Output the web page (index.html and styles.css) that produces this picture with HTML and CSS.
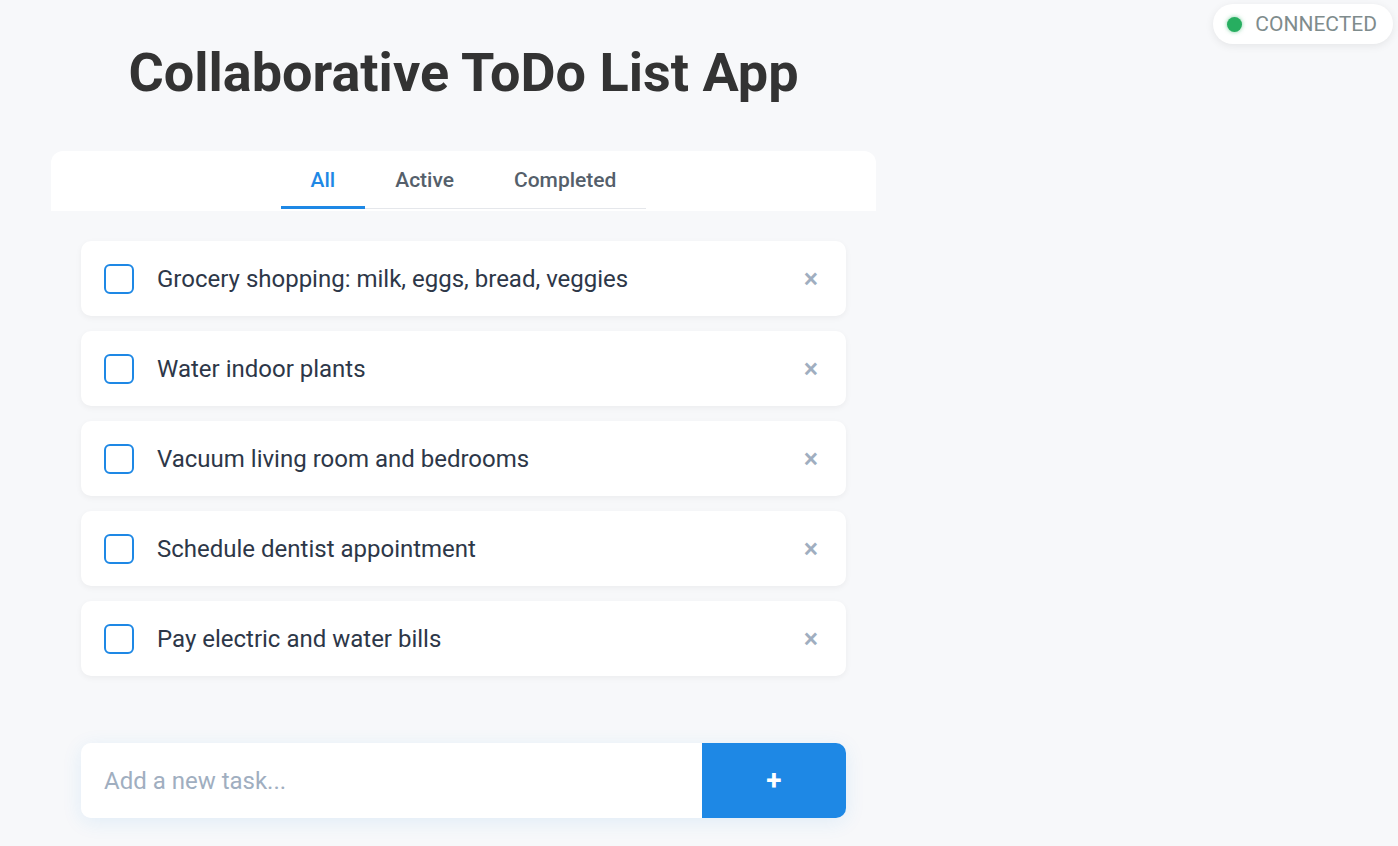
FILE: index.html
```html
<!DOCTYPE html>
<html lang="en">
<head>
<meta charset="utf-8">
<title>Collaborative ToDo List App</title>
<link rel="stylesheet" href="styles.css">
</head>
<body>
<div class="status">
  <span class="dot"></span>
  <span class="status-text">Connected</span>
</div>
<main class="app">
  <h1 class="title">Collaborative ToDo List App</h1>
  <div class="tabs-card">
    <nav class="tabs">
      <button class="tab active">All</button>
      <button class="tab">Active</button>
      <button class="tab">Completed</button>
    </nav>
  </div>
  <ul class="list">
    <li class="item"><span class="check"></span><span class="label">Grocery shopping: milk, eggs, bread, veggies</span><span class="del">×</span></li>
    <li class="item"><span class="check"></span><span class="label">Water indoor plants</span><span class="del">×</span></li>
    <li class="item"><span class="check"></span><span class="label">Vacuum living room and bedrooms</span><span class="del">×</span></li>
    <li class="item"><span class="check"></span><span class="label">Schedule dentist appointment</span><span class="del">×</span></li>
    <li class="item"><span class="check"></span><span class="label">Pay electric and water bills</span><span class="del">×</span></li>
  </ul>
  <form class="add">
    <input class="add-input" type="text" placeholder="Add a new task...">
    <button class="add-btn" type="button">+</button>
  </form>
</main>
</body>
</html>
```
FILE: styles.css
```css
* { box-sizing: border-box; }
html, body { margin: 0; padding: 0; }
body {
  background: #f7f8fa;
  font-family: Roboto, "Liberation Sans", sans-serif;
  color: #2d3748;
  width: 1398px;
  height: 846px;
  overflow: hidden;
}
.status {
  position: absolute;
  top: 4px;
  right: 5px;
  height: 40px;
  padding: 0 16px 0 14px;
  display: flex;
  align-items: center;
  gap: 13px;
  background: #fff;
  border-radius: 20px;
  box-shadow: 0 2px 8px rgba(0,0,0,0.08);
}
.dot {
  width: 15px;
  height: 15px;
  border-radius: 50%;
  background: #27ae60;
  box-shadow: 0 0 4px rgba(39,174,96,0.6);
}
.status-text {
  text-transform: uppercase;
  color: #7f8c8d;
  font-size: 21px;
}
.app {
  margin-left: 51px;
  width: 825px;
  display: flex;
  flex-direction: column;
}
.title {
  margin: 40px 0 0;
  height: 66px;
  line-height: 66px;
  font-size: 54px;
  font-weight: 700;
  color: #333;
  text-align: center;
}
.tabs-card {
  margin-top: 45px;
  background: #fff;
  border-radius: 12px 12px 0 0;
  height: 60px;
  display: flex;
  justify-content: center;
}
.tabs {
  display: flex;
  align-self: flex-end;
  margin-bottom: 2px;
  border-bottom: 1px solid #e5e7eb;
}
.tab {
  border: none;
  background: none;
  font-family: inherit;
  font-size: 21px;
  font-weight: 500;
  color: #555f6b;
  padding: 9px 30px 14px;
  margin-bottom: -1px;
  border-bottom: 3px solid transparent;
}
.tab.active {
  color: #1e88e5;
  border-bottom-color: #1e88e5;
}
.list {
  list-style: none;
  margin: 30px 30px 0;
  padding: 0;
  display: flex;
  flex-direction: column;
  gap: 15px;
}
.item {
  height: 75px;
  background: #fff;
  border-radius: 10px;
  box-shadow: 0 2px 6px rgba(0,0,0,0.05);
  display: flex;
  align-items: center;
  padding: 0 28px 0 23px;
}
.check {
  width: 30px;
  height: 30px;
  border: 2px solid #1e88e5;
  border-radius: 6px;
  flex: none;
}
.label {
  margin-left: 23px;
  flex: 1;
  font-size: 24px;
  color: #2d3748;
}
.del {
  color: #a0aec0;
  font-size: 27px;
  font-weight: 500;
}
.add {
  margin: 67px 30px 0;
  height: 75px;
  display: flex;
  border-radius: 10px;
  box-shadow: 0 4px 20px rgba(30,136,229,0.1);
}
.add-input {
  flex: 1;
  border: none;
  outline: none;
  background: #fff;
  border-radius: 10px 0 0 10px;
  padding: 0 23px;
  font-family: inherit;
  font-size: 24px;
  color: #2d3748;
}
.add-input::placeholder { color: #a0aec0; }
.add-btn {
  width: 144px;
  border: none;
  background: #1e88e5;
  color: #fff;
  border-radius: 0 10px 10px 0;
  font-family: inherit;
  font-size: 28px;
  font-weight: 700;
}
```
